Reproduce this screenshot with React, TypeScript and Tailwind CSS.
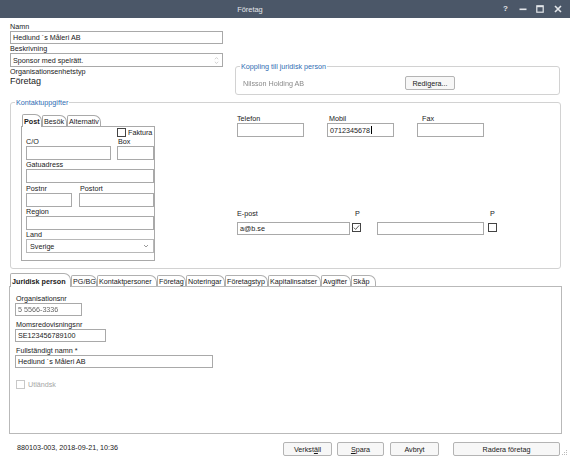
import clsx from 'clsx';

const innerTabs = [
  { label: 'Post', w: 'w-[20px]', active: true },
  { label: 'Besök', w: 'w-[25px]' },
  { label: 'Alternativ', w: 'w-[34px]' },
];

const tabs = [
  { label: 'Juridisk person', w: 'w-[61px]', active: true },
  { label: 'PG/BG', w: 'w-[26px]' },
  { label: 'Kontaktpersoner', w: 'w-[60px]' },
  { label: 'Företag', w: 'w-[29px]' },
  { label: 'Noteringar', w: 'w-[39px]' },
  { label: 'Företagstyp', w: 'w-[43px]' },
  { label: 'Kapitalinsatser', w: 'w-[53px]' },
  { label: 'Avgifter', w: 'w-[30px]' },
  { label: 'Skåp', w: 'w-[25px]' },
];

function Field({
  w,
  h = 'h-[14px]',
  children,
  className,
}: {
  w: string;
  h?: string;
  children?: React.ReactNode;
  className?: string;
}) {
  return (
    <div
      className={clsx(
        'flex shrink-0 items-center overflow-hidden whitespace-nowrap border border-[#a9a9a9] bg-white px-[2px]',
        w,
        h,
        className,
      )}
    >
      {children}
    </div>
  );
}

function Check({ checked, disabled }: { checked?: boolean; disabled?: boolean }) {
  return (
    <span
      className={clsx(
        'flex size-[9px] shrink-0 items-center justify-center border bg-white',
        disabled ? 'border-[#c8c8c8]' : 'border-[#444]',
      )}
    >
      {checked ? (
        <svg viewBox="0 0 8 8" className="size-[7px]">
          <path d="M1 4.2 L3 6.2 L7 1.6" fill="none" stroke="#333" strokeWidth="0.9" />
        </svg>
      ) : null}
    </span>
  );
}

function Button({ w, children, className }: { w: string; children: React.ReactNode; className?: string }) {
  return (
    <div
      className={clsx(
        'flex h-[14px] shrink-0 items-center justify-center rounded-[2px] border border-[#b4b4b4] bg-[#f7f7f7]',
        w,
        className,
      )}
    >
      {children}
    </div>
  );
}

export default function App() {
  return (
    <div className="relative flex h-[458px] w-[570px] flex-col overflow-hidden bg-white font-['Liberation_Sans',Arial,sans-serif] text-[7.2px] leading-[9px] text-[#1a1a1a]">
      {/* title bar */}
      <div className="flex h-[18px] shrink-0 items-center bg-[#4b5768] text-[#e3e6ea]">
        <div className="flex-1 text-center text-[7.4px]">Företag</div>
        <div className="flex w-[70px] items-center">
          <span className="ml-[3px] w-[6px] text-[8px] font-bold leading-none">?</span>
          <svg viewBox="0 0 8 8" className="ml-[10px] size-[8px]">
            <rect x="0.5" y="3.5" width="7" height="1.6" fill="#e3e6ea" />
          </svg>
          <svg viewBox="0 0 8 8" className="ml-[9px] size-[8px]">
            <rect x="0.8" y="0.8" width="6.4" height="6.4" fill="none" stroke="#e3e6ea" strokeWidth="1.2" />
            <rect x="0.8" y="0.8" width="6.4" height="1.4" fill="#e3e6ea" />
          </svg>
          <svg viewBox="0 0 8 8" className="ml-[10px] size-[8px]">
            <path d="M1 1 L7 7 M7 1 L1 7" stroke="#e3e6ea" strokeWidth="1.6" />
          </svg>
        </div>
      </div>

      <div className="flex flex-1 flex-col px-[10px]">
        {/* top section */}
        <div className="flex items-start pt-[4px]">
          <div className="w-[213px]">
            <div>Namn</div>
            <Field w="w-[213px]" h="h-[13px]">
              Hedlund ´s Måleri AB
            </Field>
            <div>Beskrivning</div>
            <Field w="w-[213px]" h="h-[14px]" className="justify-between">
              <span>Sponsor med spelrätt.</span>
              <svg viewBox="0 0 6 10" className="mr-[1px] h-[9px] w-[5px]">
                <path d="M1 3.5 L3 1.5 L5 3.5 M1 6.5 L3 8.5 L5 6.5" fill="none" stroke="#b0b0b0" strokeWidth="0.7" />
              </svg>
            </Field>
            <div>Organisationsenhetstyp</div>
            <div className="text-[9px] leading-[11px]">Företag</div>
          </div>

          <fieldset className="ml-[12px] mt-[40px] w-[326px] rounded-[3px] border border-[#d2d2d2]">
            <legend className="ml-[4px] px-px text-[#2f6db3]">Koppling till juridisk person</legend>
            <div className="flex items-center pb-[4px] pt-[5px]">
              <span className="w-[169px] pl-[7px] text-[#8a8a8a] blur-[0.7px]">Nilsson Holding AB</span>
              <Button w="w-[50px]" className="h-[13px]">
                Redi<span className="underline">g</span>era...
              </Button>
            </div>
          </fieldset>
        </div>

        {/* kontaktuppgifter */}
        <fieldset className="mt-[3px] w-[551px] rounded-[3px] border border-[#d2d2d2]">
          <legend className="ml-[4px] px-px text-[#2f6db3]">Kontaktuppgifter</legend>
          <div className="flex h-[161px]">
            <div className="ml-[10px] mt-[7px] w-[134px]">
              <div className="flex h-[12px] items-end pl-px">
                {innerTabs.map((t) => (
                  <div
                    key={t.label}
                    className={clsx(
                      'shrink-0 rounded-tl-[2px] rounded-tr-[7px] border border-b-0 border-[#a9a9a9] bg-white pl-px',
                      t.w,
                      t.active ? 'relative z-10 -mb-px h-[13px] pt-[2px] font-bold' : 'h-[11px] pt-px',
                    )}
                  >
                    {t.label}
                  </div>
                ))}
              </div>
              <div className="h-[135px] border border-[#a9a9a9] pl-[4px]">
                <div className="mt-px flex h-[9px] items-center pl-[91px]">
                  <Check />
                  <span className="ml-[2px]">Faktura</span>
                </div>
                <div className="flex">
                  <span className="w-[92px]">C/O</span>
                  <span>Box</span>
                </div>
                <div className="flex">
                  <Field w="w-[85px]" />
                  <Field w="w-[37px]" className="ml-[6px]" />
                </div>
                <div>Gatuadress</div>
                <Field w="w-[128px]" />
                <div className="mt-px flex">
                  <span className="w-[54px]">Postnr</span>
                  <span>Postort</span>
                </div>
                <div className="flex">
                  <Field w="w-[46px]" />
                  <Field w="w-[75px]" className="ml-[7px]" />
                </div>
                <div>Region</div>
                <Field w="w-[128px]" />
                <div>Land</div>
                <Field w="w-[128px]" className="justify-between border-[#b8b8b8] bg-[#e6e6e6] pl-[3px]">
                  <span>Sverige</span>
                  <svg viewBox="0 0 8 6" className="mr-[2px] h-[4px] w-[6px]">
                    <path d="M1 1.5 L4 4.5 L7 1.5" fill="none" stroke="#555" strokeWidth="0.9" />
                  </svg>
                </Field>
              </div>
            </div>

            <div className="ml-[82px] pt-[7px]">
              <div className="flex">
                <span className="w-[92px]">Telefon</span>
                <span className="w-[93px]">Mobil</span>
                <span>Fax</span>
              </div>
              <div className="flex">
                <Field w="w-[67px]" />
                <Field w="w-[67px]" className="ml-[23px] border-[#3d7fc1]">
                  0712345678
                  <span className="ml-px inline-block h-[8px] w-px bg-black" />
                </Field>
                <Field w="w-[67px]" className="ml-[23px]" />
              </div>
              <div className="mt-[72px] flex">
                <span className="w-[118px]">E-post</span>
                <span className="w-[135px]">P</span>
                <span>P</span>
              </div>
              <div className="mt-[4px] flex items-start">
                <Field w="w-[113px]" h="h-[13px]">
                  a@b.se
                </Field>
                <span className="ml-[2px] mt-[1px]">
                  <Check checked />
                </span>
                <Field w="w-[107px]" h="h-[13px]" className="ml-[16px]" />
                <span className="ml-[4px] mt-[1px]">
                  <Check />
                </span>
              </div>
            </div>
          </div>
        </fieldset>

        {/* bottom tabs */}
        <div className="-ml-px mt-[4px] w-[553px]">
          <div className="flex h-[13px] items-end pl-px">
            {tabs.map((t) => (
              <div
                key={t.label}
                className={clsx(
                  'shrink-0 whitespace-nowrap rounded-tl-[2px] rounded-tr-[7px] border border-b-0 border-[#b0b0b0] bg-white pl-px',
                  t.w,
                  t.active ? 'relative z-10 -mb-px h-[14px] pt-[3px] font-bold' : 'h-[11px] pt-px',
                )}
              >
                {t.label}
              </div>
            ))}
          </div>
          <div className="h-[148px] border border-[#b9b9b9] pl-[5px] pt-[7px]">
            <div className="pl-px">Organisationsnr</div>
            <Field w="w-[67px]" h="h-[13px]" className="bg-[#ededf9]">
              <span className="text-[#666] blur-[0.6px]">5 5566-3336</span>
            </Field>
            <div className="mt-[4px] pl-px">Momsredovisningsnr</div>
            <Field w="w-[91px]" h="h-[13px]">
              SE123456789100
            </Field>
            <div className="mt-[4px] pl-px">Fullständigt namn *</div>
            <Field w="w-[198px]" h="h-[13px]">
              Hedlund ´s Måleri AB
            </Field>
            <div className="ml-px mt-[12px] flex items-center">
              <Check disabled />
              <span className="ml-[3px] text-[#a6a6a6]">Utländsk</span>
            </div>
          </div>
        </div>

        {/* footer */}
        <div className="flex items-start pt-[8px]">
          <span className="mt-px w-[273px] pl-[7px]">880103-003, 2018-09-21, 10:36</span>
          <Button w="w-[49px]">
            Verkst<span className="underline">ä</span>ll
          </Button>
          <Button w="w-[47px]" className="ml-[5px]">
            <span className="underline">S</span>para
          </Button>
          <Button w="w-[49px]" className="ml-[6px]">
            Avbryt
          </Button>
          <Button w="w-[107px]" className="ml-[14px]">
            Radera företag
          </Button>
        </div>
      </div>

      <svg viewBox="0 0 6 6" className="absolute bottom-[2px] right-[2px] size-[6px]">
        <rect x="4" y="0" width="1" height="1" fill="#bbb" />
        <rect x="2" y="2" width="1" height="1" fill="#bbb" />
        <rect x="4" y="2" width="1" height="1" fill="#bbb" />
        <rect x="0" y="4" width="1" height="1" fill="#bbb" />
        <rect x="2" y="4" width="1" height="1" fill="#bbb" />
        <rect x="4" y="4" width="1" height="1" fill="#bbb" />
      </svg>
    </div>
  );
}
